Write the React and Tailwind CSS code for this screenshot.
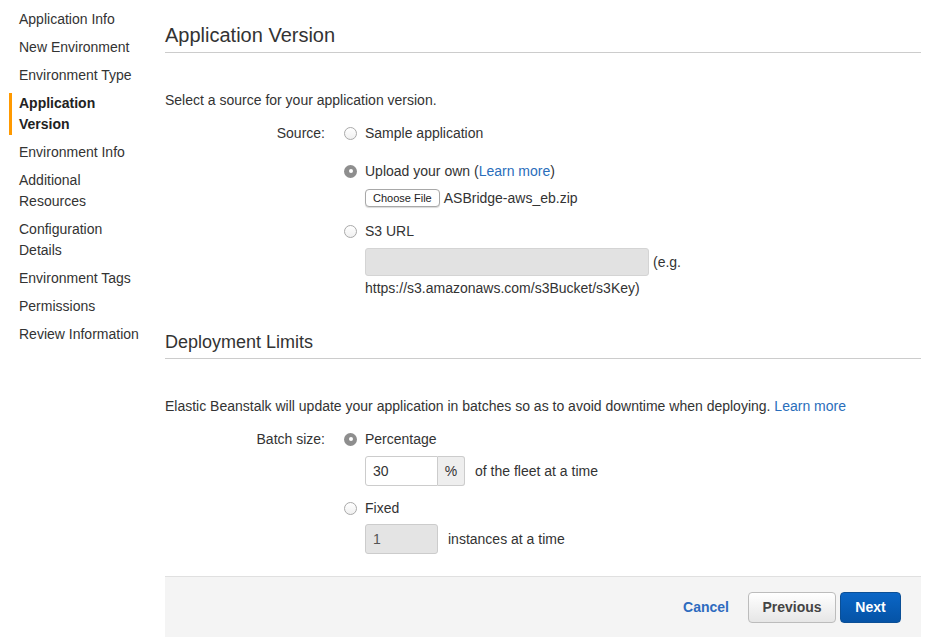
import React from "react";

const navItems = [
  "Application Info",
  "New Environment",
  "Environment Type",
  "Application Version",
  "Environment Info",
  "Additional Resources",
  "Configuration Details",
  "Environment Tags",
  "Permissions",
  "Review Information",
];

const Radio = ({ checked }) =>
  checked ? (
    <span className="w-[13px] h-[13px] rounded-full bg-[#8e8e8e] flex items-center justify-center shrink-0">
      <span className="w-[4px] h-[4px] rounded-full bg-white" />
    </span>
  ) : (
    <span className="w-[13px] h-[13px] rounded-full border border-[#a9a9a9] bg-gradient-to-b from-white to-[#f0f0f0] shrink-0" />
  );

const Option = ({ checked, children, className = "" }) => (
  <div className={"flex items-center gap-2 leading-[20px] " + className}>
    <Radio checked={checked} />
    <span>{children}</span>
  </div>
);

const Sidebar = () => (
  <div className="w-[147px] shrink-0 pl-[9px] pt-[9px] flex flex-col gap-[7px]">
    {navItems.map((item) => {
      const active = item === "Application Version";
      return (
        <div
          key={item}
          className={
            "border-l-[3px] pl-[7px] leading-[21px] " +
            (active ? "border-[#f90] font-bold text-[#222]" : "border-transparent")
          }
        >
          {item}
        </div>
      );
    })}
  </div>
);

const App = () => {
  return (
    <div className="w-[928px] h-[637px] overflow-hidden bg-white flex text-[14px] text-[#333] font-['Liberation_Sans',Arial,sans-serif]">
      <Sidebar />
      <div className="ml-[18px] w-[756px] pt-[23px] flex flex-col">
        <h1 className="text-[20px] leading-[24px] pb-[5px] border-b border-[#ccc] text-[#333]">
          Application Version
        </h1>
        <p className="mt-[37px] leading-[20px]">Select a source for your application version.</p>

        <div className="flex mt-[13px]">
          <div className="w-[160px] text-right leading-[20px]">Source:</div>
          <div className="pl-[19px] flex flex-col">
            <Option>Sample application</Option>
            <Option checked className="mt-[18px]">
              Upload your own (<span className="text-[#2a6ebb]">Learn more</span>)
            </Option>
            <div className="ml-[21px] mt-[7px] flex items-center gap-[4px] h-[20px]">
              <span className="h-[18px] px-[7px] flex items-center text-[11px] bg-white border border-[#a8a8a8] rounded-[4px] shadow-[0_1px_1px_rgba(0,0,0,0.15)] text-[#222]">
                Choose File
              </span>
              <span>ASBridge-aws_eb.zip</span>
            </div>
            <Option className="mt-[13px]">S3 URL</Option>
            <div className="ml-[21px] mt-[7px] flex items-center gap-[4px]">
              <span className="w-[284px] h-[28px] bg-[#e2e2e2] border border-[#d4d4d4] rounded-[3px]" />
              <span>(e.g.</span>
            </div>
            <div className="ml-[21px] mt-[2px] leading-[20px]">https://s3.amazonaws.com/s3Bucket/s3Key)</div>
          </div>
        </div>

        <h2 className="mt-[33px] text-[18px] leading-[22px] pb-[5px] border-b border-[#ccc]">
          Deployment Limits
        </h2>
        <p className="mt-[37px] leading-[20px]">
          Elastic Beanstalk will update your application in batches so as to avoid downtime when deploying.{" "}
          <span className="text-[#2a6ebb]">Learn more</span>
        </p>

        <div className="flex mt-[13px]">
          <div className="w-[160px] text-right leading-[20px]">Batch size:</div>
          <div className="pl-[19px] flex flex-col">
            <Option checked>Percentage</Option>
            <div className="ml-[21px] mt-[7px] flex items-center">
              <div className="flex h-[30px]">
                <span className="w-[73px] border border-[#ccc] rounded-l-[3px] bg-white flex items-center pl-[7px]">30</span>
                <span className="w-[27px] border border-l-0 border-[#ccc] rounded-r-[3px] bg-[#eee] flex items-center justify-center">%</span>
              </div>
              <span className="ml-[10px]">of the fleet at a time</span>
            </div>
            <Option className="mt-[12px]">Fixed</Option>
            <div className="ml-[21px] mt-[6px] flex items-center">
              <span className="w-[73px] h-[30px] border border-[#ccc] rounded-[3px] bg-[#e4e4e4] flex items-center pl-[7px] text-[#555]">1</span>
              <span className="ml-[10px]">instances at a time</span>
            </div>
          </div>
        </div>

        <div className="mt-[22px] h-[70px] bg-[#f4f4f4] border-t border-[#e0e0e0] flex justify-end items-start pt-[15px] pr-[20px]">
          <span className="h-[31px] flex items-center font-bold text-[#2d6bbf] mr-[19px]">Cancel</span>
          <span className="h-[31px] w-[88px] flex items-center justify-center font-bold text-[#444] border border-[#bcbcbc] rounded-[4px] bg-gradient-to-b from-white to-[#e6e6e6]">
            Previous
          </span>
          <span className="ml-[4px] h-[31px] w-[61px] flex items-center justify-center font-bold text-white border border-[#0b4f96] rounded-[4px] bg-gradient-to-b from-[#0b66c6] to-[#0553a6]">
            Next
          </span>
        </div>
      </div>
    </div>
  );
};

export default App;
